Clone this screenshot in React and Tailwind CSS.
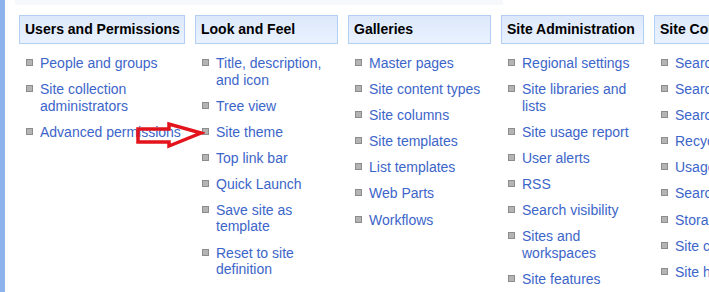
import React from "react";

const columns = [
  {
    title: "Users and Permissions",
    width: "w-[166px]",
    items: ["People and groups", "Site collection administrators", "Advanced permissions"],
  },
  {
    title: "Look and Feel",
    width: "w-[143px]",
    items: [
      "Title, description, and icon",
      "Tree view",
      "Site theme",
      "Top link bar",
      "Quick Launch",
      "Save site as template",
      "Reset to site definition",
    ],
  },
  {
    title: "Galleries",
    width: "w-[143px]",
    items: [
      "Master pages",
      "Site content types",
      "Site columns",
      "Site templates",
      "List templates",
      "Web Parts",
      "Workflows",
    ],
  },
  {
    title: "Site Administration",
    width: "w-[143px]",
    items: [
      "Regional settings",
      "Site libraries and lists",
      "Site usage report",
      "User alerts",
      "RSS",
      "Search visibility",
      "Sites and workspaces",
      "Site features",
    ],
  },
  {
    title: "Site Collection Administration",
    width: "w-[230px]",
    nowrap: true,
    items: [
      "Search settings",
      "Search scopes",
      "Search keywords",
      "Recycle bin",
      "Usage reports",
      "Search usage reports",
      "Storage space allocation",
      "Site collection features",
      "Site hierarchy",
    ],
  },
];

function Bullet() {
  return (
    <span className="mt-[4px] block h-[7px] w-[7px] shrink-0 border border-[#8c8c8c] bg-[#b4b4b4]" />
  );
}

function Column({ title, width, items, nowrap }) {
  return (
    <div className={`${width} shrink-0`}>
      <div className="h-[29px] whitespace-nowrap overflow-hidden border border-[#b3cff4] bg-gradient-to-b from-[#dce8fb] to-[#eaf2fe] pl-[5px] text-[14px] font-bold leading-[27px] text-black">
        {title}
      </div>
      <ul className="mt-[11px] flex flex-col gap-[9.6px] pl-[7px]">
        {items.map((item) => (
          <li key={item} className="flex gap-[7px]">
            <Bullet />
            <a
              href="#"
              className={
                nowrap
                  ? "whitespace-nowrap text-[14px] leading-[16.5px] text-[#3c65c9]"
                  : "text-[14px] leading-[16.5px] text-[#3c65c9]"
              }
            >
              {item}
            </a>
          </li>
        ))}
      </ul>
    </div>
  );
}

export default function App() {
  return (
    <div
      className="relative flex h-[292px] w-[709px] overflow-hidden bg-white"
      style={{ fontFamily: '"Liberation Sans", Arial, sans-serif' }}
    >
      {/* left frame bar */}
      <div className="h-full w-[5px] shrink-0 bg-[#8cb3ec]" />

      <div className="flex flex-col">
        <div className="ml-[10px] h-[5px] w-[488px] shrink-0 bg-[#f7f8fb]" />
        <div className="mt-[10px] flex gap-[10px] pl-[14px]">
          {columns.map((col) => (
            <Column key={col.title} {...col} />
          ))}
        </div>
      </div>

      {/* red arrow annotation */}
      <svg
        className="absolute left-[135px] top-[121px]"
        width="70"
        height="29"
        viewBox="0 0 70 29"
      >
        <polygon
          points="3,8 34,8 34,3 66,12 34,25 34,21 3,21"
          fill="none"
          stroke="#e3141c"
          strokeWidth="3.5"
          strokeLinejoin="miter"
        />
      </svg>
    </div>
  );
}
